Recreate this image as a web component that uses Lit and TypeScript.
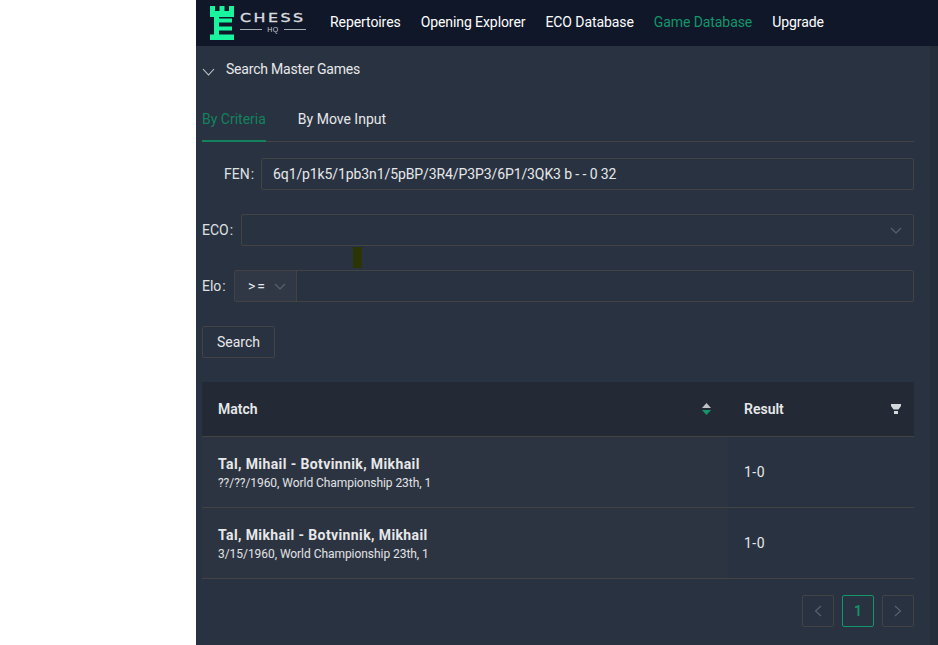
import { LitElement, html, css, svg } from "lit";
import { customElement } from "lit/decorators.js";

const chevron = (d: string) => svg`<path d="${d}" fill="none" stroke="currentColor" stroke-width="1.1"/>`;

@customElement("app-root")
export class AppRoot extends LitElement {
  static styles = css`
    :host { display: flex; width: 938px; height: 645px; overflow: hidden; background: #fff;
      font-family: Roboto, "Open Sans", sans-serif; font-size: 14px; color: #e6e8ea; }
    * { box-sizing: border-box; }
    .side { width: 196px; flex: none; }
    .main { flex: 1; display: flex; flex-direction: column; background: #293241; min-width: 0; }
    nav { height: 46px; flex: none; background: #0f1729; display: flex; align-items: center; padding-left: 14px; }
    .logo { display: flex; align-items: center; width: 120px; gap: 6px; flex: none; }
    .logo svg { flex: none; }
    .wm { display: flex; flex-direction: column; align-items: center; width: 66px; margin-top: -1px; }
    .chess { font-family: "DejaVu Sans", sans-serif; font-size: 13px; line-height: 14px; letter-spacing: 2px; color: #d9dcdf; -webkit-text-stroke: .35px #d9dcdf; transform: scaleX(1.22); transform-origin: center; }
    .hq { display: flex; align-items: center; gap: 5px; font-family: "Liberation Sans", sans-serif; font-size: 7px; line-height: 9px; letter-spacing: .5px; color: #c9cdd1; width: 100%; }
    .hq i { flex: 1; height: 1px; background: #a8adb2; }
    .links { display: flex; gap: 20px; color: #fff; padding-bottom: 3px; letter-spacing: -.08px; }
    .links .on { color: #12966a; }
    .body { flex: 1; display: flex; min-height: 0; }
    .content { flex: 1; padding: 0 16px 0 6px; min-width: 0; position: relative; }
    .track { width: 8px; flex: none; background: #252d3a; }
    .coll { height: 47px; display: flex; align-items: center; gap: 11px; }
    .coll span { margin-top: -1px; letter-spacing: -.2px; }
    .coll svg { color: #c9ccd0; margin-top: 4px; }
    .tabs { display: flex; gap: 32px; height: 49px; border-bottom: 1px solid #434343; }
    .tab { height: 49px; padding-top: 17px; line-height: 19px; border-bottom: 2px solid transparent; }
    .tab.on { color: #12825d; border-bottom-color: #12825d; }
    .row { display: flex; align-items: center; height: 32px; }
    .lbl { white-space: nowrap; color: #dfe1e3; flex: none; margin-top: -1px; }
    .lbl.fen { width: 59px; padding-left: 22px; }
    .lbl.eco { width: 39px; }
    .lbl.elo { width: 32px; }
    .colon { margin-left: 1px; }
    .box { flex: 1; height: 32px; border: 1px solid #434343; border-radius: 2px; display: flex; align-items: center; padding: 0 11px; color: #e6e8ea; min-width: 0; letter-spacing: -.1px; }
    .box svg { margin-left: auto; color: #5b6270; }
    .fen-row { margin-top: 16px; }
    .gap { margin-top: 24px; }
    .eloin { flex: 1; display: flex; height: 32px; border: 1px solid #434343; border-radius: 2px; }
    .sel { width: 62px; background: #303846; border-right: 1px solid #434343; display: flex; align-items: center; gap: 7px; padding-left: 13px; }
    .sel span { letter-spacing: 2px; }
    .sel svg { color: #5b6270; }
    .btn { margin-top: 24px; width: 73px; height: 32px; border: 1px solid #434343; border-radius: 2px; display: flex; align-items: center; justify-content: center; }
    .table { margin-top: 24px; }
    .tr { display: grid; grid-template-columns: 526px 186px; border-bottom: 1px solid #434343; }
    .th { background: #232a35; height: 54px; display: flex; align-items: center; justify-content: space-between; font-weight: 600; padding: 0 17px 0 16px; color: #e6e8ea; }
    .th.res { padding-right: 13px; }
    .td { height: 70px; display: flex; flex-direction: column; justify-content: center; padding: 3px 16px 0; }
    .td.res { padding-top: 0; letter-spacing: .5px; }
    .td.first { background: #2d3441; }
    .name { font-weight: 700; line-height: 19px; color: #e6e8ea; letter-spacing: .39px; }
    .sub { font-size: 12px; line-height: 17px; color: #e0e3e6; margin-top: 1px; letter-spacing: -.05px; }
    .pager { display: flex; justify-content: flex-end; gap: 8px; margin-top: 16px; }
    .pg { width: 32px; height: 32px; border: 1px solid #434343; border-radius: 2px; display: flex; align-items: center; justify-content: center; color: #5b6270; }
    .pg.on { border-color: #12966a; color: #12966a; font-weight: 600; }
    .tick { position: absolute; left: 157px; top: 201px; width: 9px; height: 21px; background: #2b3503; }
  `;

  render() {
    return html`
      <div class="side"></div>
      <div class="main">
        <nav>
          <div class="logo">
            <svg width="24" height="34" viewBox="0 0 24 34"><path fill="#19f59e" d="M0 0h5v5h4.500V0h5v5H19V0h5v11H9v1.500h13v4H9v4h13v4H9V28.500h15V34H0V28.500h4V11H0z"/></svg>
            <div class="wm"><span class="chess">CHESS</span><span class="hq"><i></i>HQ<i></i></span></div>
          </div>
          <div class="links"><span>Repertoires</span><span>Opening Explorer</span><span>ECO Database</span><span class="on">Game Database</span><span>Upgrade</span></div>
        </nav>
        <div class="body">
          <div class="content">
            <div class="coll"><svg width="13" height="8" viewBox="0 0 13 8">${chevron("M1 1l5.500 6L12 1")}</svg><span>Search Master Games</span></div>
            <div class="tabs"><span class="tab on">By Criteria</span><span class="tab">By Move Input</span></div>
            <div class="row fen-row"><span class="lbl fen">FEN<span class="colon">:</span></span><div class="box">6q1/p1k5/1pb3n1/5pBP/3R4/P3P3/6P1/3QK3 b - - 0 32</div></div>
            <div class="row gap"><span class="lbl eco">ECO<span class="colon">:</span></span><div class="box"><svg width="12" height="7" viewBox="0 0 12 7">${chevron("M1 1l5 5 5-5")}</svg></div></div>
            <div class="row gap"><span class="lbl elo">Elo<span class="colon">:</span></span><div class="eloin"><div class="sel"><span>&gt;=</span><svg width="12" height="7" viewBox="0 0 12 7">${chevron("M1 1l5 5 5-5")}</svg></div></div></div>
            <div class="btn">Search</div>
            <div class="table">
              <div class="tr">
                <div class="th">Match<svg width="9" height="12" viewBox="0 0 9 12"><path fill="#bfc3c7" d="M4.500 0L9 5H0z"/><path fill="#12966a" d="M0 7h9L4.500 12z"/></svg></div>
                <div class="th res">Result<svg width="10" height="10" viewBox="0 0 10 10"><path fill="#d5d8da" d="M0 0h10v2L7.500 5.500H2.500L0 2zM3 7h4v3H3z"/></svg></div>
              </div>
              <div class="tr"><div class="td first"><div class="name">Tal, Mihail - Botvinnik, Mikhail</div><div class="sub">??/??/1960, World Championship 23th, 1</div></div><div class="td res">1-0</div></div>
              <div class="tr"><div class="td first"><div class="name">Tal, Mikhail - Botvinnik, Mikhail</div><div class="sub">3/15/1960, World Championship 23th, 1</div></div><div class="td res">1-0</div></div>
            </div>
            <div class="pager">
              <div class="pg"><svg width="8" height="12" viewBox="0 0 8 12">${chevron("M7 1L1.500 6 7 11")}</svg></div>
              <div class="pg on">1</div>
              <div class="pg"><svg width="8" height="12" viewBox="0 0 8 12">${chevron("M1 1l5.500 5L1 11")}</svg></div>
            </div>
            <div class="tick"></div>
          </div>
          <div class="track"></div>
        </div>
      </div>`;
  }
}
